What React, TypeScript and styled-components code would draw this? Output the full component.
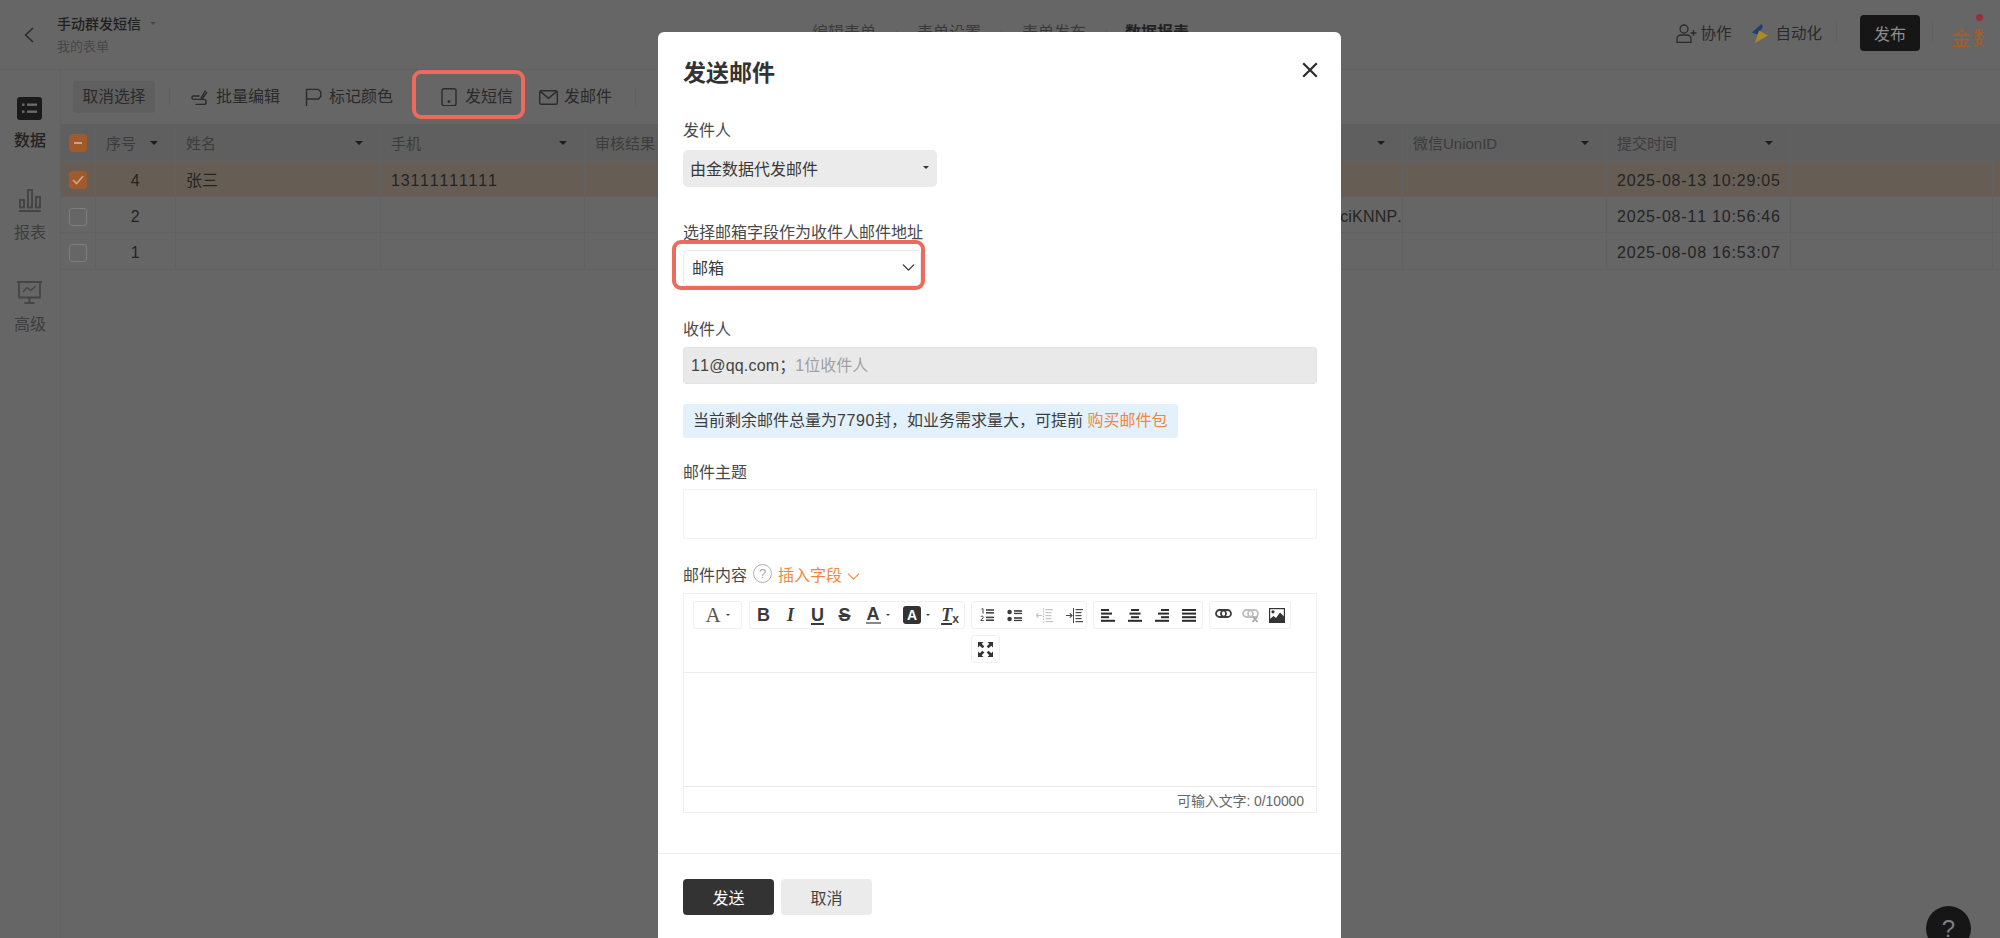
import React from "react";
import styled, { createGlobalStyle } from "styled-components";
import { ChevronDown, ChevronRight } from "lucide-react";

const FONT = `"Liberation Sans", "Noto Sans CJK SC", sans-serif`;
const DIM_LINE = "#616161";

const Global = createGlobalStyle`
  html, body { margin: 0; padding: 0; background: #666; overflow: hidden; }
  body { font-family: ${FONT}; font-kerning: none; }
  * { box-sizing: border-box; }
`;

const Page = styled.div`
  position: relative;
  width: 2000px;
  height: 938px;
  overflow: hidden;
  background: #666;
  color: #222;
`;

/* ---------- top header ---------- */
const Header = styled.header`
  height: 70px;
  display: flex;
  align-items: center;
  border-bottom: 1px solid ${DIM_LINE};
`;
const HeaderLeft = styled.div`
  width: 812px;
  display: flex;
  align-items: center;
  padding-left: 24px;
  gap: 23px;
  color: #2a2a2a;
`;
const TitleBlock = styled.div`
  display: flex;
  flex-direction: column;
  gap: 8px;
`;
const TitleRow = styled.div`
  display: flex;
  align-items: center;
  gap: 9px;
  font-size: 14px;
  line-height: 16px;
  font-weight: 500;
  color: #1f1f1f;
`;
const SubTitle = styled.div`
  font-size: 13px;
  line-height: 14px;
  color: #474747;
`;
const Caret = styled.span<{ $c?: string; $w?: number }>`
  display: inline-block;
  width: 0;
  height: 0;
  flex: none;
  border-left: ${(p) => p.$w ?? 4}px solid transparent;
  border-right: ${(p) => p.$w ?? 4}px solid transparent;
  border-top: ${(p) => p.$w ?? 4}px solid ${(p) => p.$c ?? "#222"};
`;
const Nav = styled.nav`
  display: flex;
  align-items: center;
  gap: 14.5px;
  padding-bottom: 4px;
`;
const NavItem = styled.span<{ $on?: boolean }>`
  font-size: 16px;
  line-height: 16px;
  width: 64px;
  margin-left: ${(p) => (p.$on ? -2 : 0)}px;
  font-weight: ${(p) => (p.$on ? 700 : 400)};
  color: ${(p) => (p.$on ? "#222" : "#3a3a3a")};
`;
const HeaderRight = styled.div`
  margin-left: auto;
  display: flex;
  align-items: center;
  padding-right: 16px;
  height: 100%;
`;
const HeaderAction = styled.div<{ $gap: number; $ml?: number }>`
  display: flex;
  align-items: center;
  gap: ${(p) => p.$gap}px;
  margin-left: ${(p) => p.$ml ?? 0}px;
  font-size: 15.5px;
  line-height: 18px;
  color: #2a2a2a;
  margin-top: -2px;
`;
const VLine = styled.span<{ $ml: number }>`
  width: 1px;
  height: 22px;
  margin-left: ${(p) => p.$ml}px;
  margin-top: -3px;
  background: #606060;
  flex: none;
`;
const Publish = styled.div`
  width: 60px;
  height: 36px;
  margin-left: 23px;
  border-radius: 4px;
  background: #161616;
  color: #8c8c8c;
  font-size: 16px;
  display: flex;
  align-items: center;
  justify-content: center;
  margin-top: -4px;
`;
const Logo = styled.div`
  position: relative;
  margin-left: 18px;
  width: 33px;
  height: 24px;
  display: flex;
  align-items: center;
  color: #a45e2b;
  margin-top: 9px;
`;
const LogoMain = styled.span`
  font-size: 20px;
  line-height: 24px;
`;
const LogoClip = styled.span`
  font-size: 19px;
  line-height: 22px;
  width: 11px;
  margin-left: 2px;
  overflow: hidden;
  white-space: nowrap;
`;
const Dot = styled.span`
  position: absolute;
  right: 1px;
  top: -13px;
  width: 7px;
  height: 7px;
  border-radius: 50%;
  background: #972f3f;
`;

/* ---------- main area ---------- */
const Main = styled.div`
  display: flex;
  height: 868px;
`;
const Side = styled.aside`
  width: 61px;
  flex: none;
  border-right: 1px solid ${DIM_LINE};
  padding-top: 27px;
  display: flex;
  flex-direction: column;
  align-items: center;
  gap: 40px;
`;
const SideItem = styled.div<{ $on?: boolean }>`
  display: flex;
  flex-direction: column;
  align-items: center;
  gap: 13px;
  font-size: 16px;
  line-height: 16px;
  font-weight: ${(p) => (p.$on ? 500 : 400)};
  color: ${(p) => (p.$on ? "#222" : "#3d3d3d")};
`;
const Content = styled.div`
  flex: 1;
  min-width: 0;
`;
const ToolBar = styled.div`
  height: 54px;
  display: flex;
  align-items: center;
  padding-left: 12px;
  font-size: 16px;
  color: #2a2a2a;
`;
const Deselect = styled.div`
  width: 82px;
  height: 32px;
  border-radius: 4px;
  background: #5f5f5f;
  display: flex;
  align-items: center;
  justify-content: center;
  line-height: 32px;
  font-size: 15.75px;
`;
const ToolLine = styled.span<{ $ml: number }>`
  width: 1px;
  height: 18px;
  background: #606060;
  margin-left: ${(p) => p.$ml}px;
`;
const ToolItem = styled.div<{ $ml: number; $gap: number }>`
  position: relative;
  display: flex;
  align-items: center;
  gap: ${(p) => p.$gap}px;
  margin-left: ${(p) => p.$ml}px;
  line-height: 20px;
  white-space: nowrap;
`;
const RedFrame = styled.span`
  position: absolute;
  pointer-events: none;
  border: 4px solid #ee6a5c;
  border-radius: 9px;
`;
const ToolFrame = styled(RedFrame)`
  left: -29px;
  right: -12px;
  top: -17px;
  bottom: -12px;
`;

/* ---------- table ---------- */
const COLS = "35px 80px 205px 204px 205px 407px 206px 204px 184px 202px 1fr";
const TableRow = styled.div<{ $h: number; $head?: boolean; $sel?: boolean }>`
  display: grid;
  grid-template-columns: ${COLS};
  height: ${(p) => p.$h}px;
  background: ${(p) => (p.$head ? "#5f5f5f" : p.$sel ? "#665e55" : "#666")};
  border-bottom: 1px solid ${DIM_LINE};
`;
const Cell = styled.div<{ $center?: boolean; $end?: boolean; $pt?: number }>`
  display: flex;
  align-items: center;
  justify-content: ${(p) => (p.$center ? "center" : p.$end ? "flex-end" : "flex-start")};
  padding: ${(p) => p.$pt ?? 0}px ${(p) => (p.$center || p.$end ? "0" : "10px")} 0;
  border-right: 1px solid ${DIM_LINE};
  font-size: 16px;
  color: #242424;
  letter-spacing: 0.8px;
  overflow: hidden;
  white-space: nowrap;
  &:last-child { border-right: 0; }
`;
const Clipped = styled.span`
  letter-spacing: 0.2px;
  flex: none;
`;
const CnText = styled.span`
  letter-spacing: 0;
`;
const HeadCell = styled.div`
  display: flex;
  align-items: center;
  justify-content: space-between;
  padding: 0 17px 0 10px;
  border-right: 1px solid ${DIM_LINE};
  font-size: 15px;
  color: #3c3c3c;
  overflow: hidden;
  white-space: nowrap;
  &:last-child { border-right: 0; }
`;
const CheckCell = styled.div<{ $pt?: number }>`
  display: flex;
  align-items: center;
  justify-content: center;
  padding-top: ${(p) => p.$pt ?? 0}px;
  border-right: 1px solid ${DIM_LINE};
`;
const Check = styled.span<{ $on?: boolean }>`
  width: 18px;
  height: 18px;
  border-radius: 3px;
  display: flex;
  align-items: center;
  justify-content: center;
  background: ${(p) => (p.$on ? "#a05a2c" : "transparent")};
  border: 1px solid ${(p) => (p.$on ? "#a05a2c" : "#7d7d7d")};
`;
const Minus = styled.span`
  width: 8px;
  height: 2px;
  background: #c8a68e;
`;

/* ---------- help ---------- */
const Help = styled.div`
  position: absolute;
  left: 1926px;
  top: 906px;
  width: 45px;
  height: 45px;
  border-radius: 50%;
  background: #161616;
  color: #7f7f7f;
  font-size: 24px;
  line-height: 45px;
  text-align: center;
`;

/* ---------- modal ---------- */
const Modal = styled.div`
  position: absolute;
  left: 658px;
  top: 32px;
  width: 683px;
  height: 906px;
  background: #fff;
  border-radius: 6px 6px 0 0;
  overflow: hidden;
  color: #333;
`;
const ModalBody = styled.div`
  padding: 25px 24px 0 25px;
`;
const ModalHead = styled.div`
  display: flex;
  align-items: center;
  justify-content: space-between;
  height: 30px;
`;
const ModalTitle = styled.h2`
  margin: 2px 0 0;
  font-size: 23px;
  line-height: 30px;
  font-weight: 700;
  color: #333;
`;
const CloseBox = styled.span`
  margin: -4px -1px 0 0;
`;
const Label = styled.div<{ $mt: number }>`
  margin-top: ${(p) => p.$mt - 1}px;
  margin-bottom: -1px;
  padding-top: 2px;
  font-size: 16px;
  line-height: 22px;
  color: #484848;
  display: flex;
  align-items: center;
`;
const GraySelect = styled.div`
  margin-top: 9px;
  width: 254px;
  height: 37px;
  border-radius: 5px;
  background: #ebebeb;
  display: flex;
  align-items: center;
  justify-content: space-between;
  padding: 0 8px 2px 7px;
  font-size: 16px;
  color: #383838;
`;
const WhiteSelect = styled.div`
  position: relative;
  margin-top: 7px;
  width: 238px;
  height: 36px;
  border-radius: 4px;
  background: #fff;
  border: 1px solid #ececec;
  display: flex;
  align-items: center;
  justify-content: space-between;
  padding: 0 1px 2px 8px;
  font-size: 16px;
  color: #383838;
`;
const SelectFrame = styled(RedFrame)`
  left: -12px;
  right: -5px;
  top: -11px;
  bottom: -5px;
`;
const ReadonlyInput = styled.div`
  margin-top: 7px;
  height: 37px;
  border-radius: 3px;
  background: #e9e9e9;
  border: 1px solid #e4e4e4;
  padding-left: 7px;
  font-size: 16px;
  line-height: 35px;
  color: #444;
`;
const Latin = styled.span`
  letter-spacing: 0.2px;
`;
const Muted = styled.span`
  color: #a0a0a0;
`;
const Notice = styled.div`
  margin-top: 20px;
  width: 495px;
  height: 34px;
  border-radius: 3px;
  background: #e3f1fc;
  padding-left: 10px;
  font-size: 16px;
  line-height: 34px;
  color: #3d3d3d;
  white-space: pre;
`;
const Digits = styled.span`
  letter-spacing: 0.6px;
`;
const Orange = styled.span`
  color: #f2873c;
`;
const Input = styled.div`
  margin-top: 6px;
  height: 50px;
  border: 1px solid #f1f1f1;
  border-radius: 2px;
`;
const QMark = styled.span`
  width: 19px;
  height: 19px;
  margin: -6px 6px 0 6px;
  border-radius: 50%;
  border: 1px solid #b0b0b0;
  color: #a6a6a6;
  font-size: 13px;
  line-height: 17px;
  text-align: center;
`;
const InsertField = styled.span`
  display: flex;
  align-items: center;
  gap: 1px;
  color: #f2873c;
`;
const Editor = styled.div`
  margin-top: 7px;
  border: 1px solid #efefef;
  height: 220px;
  display: flex;
  flex-direction: column;
`;
const EdTools = styled.div`
  height: 79px;
  padding: 7px 25px 0 9px;
  display: flex;
  flex-wrap: wrap;
  align-content: flex-start;
  gap: 6px;
  border-bottom: 1px solid #ebebeb;
`;
const EdGroup = styled.div<{ $ml?: number; $mr?: number }>`
  height: 28px;
  display: flex;
  align-items: stretch;
  border: 1px solid #f0f0f0;
  border-radius: 3px;
  margin-left: ${(p) => p.$ml ?? 0}px;
  margin-right: ${(p) => p.$mr ?? 0}px;
`;
const EdBtn = styled.div<{ $w: number }>`
  width: ${(p) => p.$w}px;
  display: flex;
  align-items: center;
  justify-content: center;
  gap: 5px;
  color: #333;
`;
const EdLetter = styled.span<{ $serif?: boolean; $it?: boolean; $deco?: string; $size?: number; $c?: string }>`
  font-family: ${(p) => (p.$serif ? `"Liberation Serif", serif` : `"Liberation Sans", sans-serif`)};
  font-size: ${(p) => p.$size ?? 18}px;
  font-weight: ${(p) => (p.$serif && !p.$it ? 400 : 700)};
  font-style: ${(p) => (p.$it ? "italic" : "normal")};
  text-decoration: ${(p) => p.$deco ?? "none"};
  text-decoration-thickness: 2px;
  text-underline-offset: 2px;
  line-height: 20px;
  color: ${(p) => p.$c ?? "#3a3a3a"};
`;
const FontColor = styled(EdLetter)`
  display: inline-block;
  border-bottom: 2px solid #888;
  line-height: 15px;
  padding: 0 1px;
`;
const BoxA = styled.span`
  width: 18px;
  height: 18px;
  border-radius: 3px;
  background: #333;
  color: #fff;
  font-family: "Liberation Sans", sans-serif;
  font-size: 14px;
  font-weight: 700;
  line-height: 18px;
  text-align: center;
`;
const ClearFmt = styled.span`
  display: flex;
  align-items: flex-end;
`;
const ClearX = styled.span`
  font-family: "Liberation Sans", sans-serif;
  font-size: 12px;
  font-weight: 700;
  line-height: 11px;
  color: #444;
`;
const EdArea = styled.div`
  height: 114px;
  border-bottom: 1px solid #ebebeb;
`;
const EdFoot = styled.div`
  flex: 1;
  display: flex;
  align-items: center;
  justify-content: flex-end;
  padding-right: 12px;
  font-size: 14px;
  letter-spacing: -0.1px;
  color: #666;
`;
const ModalFoot = styled.div`
  margin-top: 40px;
  border-top: 1px solid #efefef;
  padding: 25px 25px 0;
  display: flex;
  gap: 7px;
`;
const Btn = styled.div<{ $primary?: boolean }>`
  width: 91px;
  height: 36px;
  border-radius: 4px;
  background: ${(p) => (p.$primary ? "#333" : "#ebebeb")};
  color: ${(p) => (p.$primary ? "#fff" : "#444")};
  font-size: 16px;
  display: flex;
  align-items: center;
  justify-content: center;
`;

/* ---------- icons ---------- */
const S = ({ w, h, children, vb }: { w: number; h: number; vb?: string; children: React.ReactNode }) => (
  <svg width={w} height={h} viewBox={vb ?? `0 0 ${w} ${h}`} fill="none" style={{ flex: "none", display: "block" }}>
    {children}
  </svg>
);

const BarsIcon = ({ rows }: { rows: [number, number, number][] }) => (
  <S w={14} h={13}>
    {rows.map(([x, y, w], i) => (
      <rect key={i} x={x} y={y} width={w} height={2} fill="#2b2b2b" />
    ))}
  </S>
);
const alignRows = {
  left: [[0, 0, 8], [0, 3.6, 11], [0, 7.2, 8], [0, 10.8, 14]],
  center: [[3, 0, 8], [1.5, 3.6, 11], [3, 7.2, 8], [0, 10.8, 14]],
  right: [[6, 0, 8], [3, 3.6, 11], [6, 7.2, 8], [0, 10.8, 14]],
  full: [[0, 0, 14], [0, 3.6, 14], [0, 7.2, 14], [0, 10.8, 14]],
} as Record<string, [number, number, number][]>;

const BackIcon = () => (
  <S w={10} h={16}>
    <path d="M9 1 L1.6 8 L9 15" stroke="#2a2a2a" strokeWidth="1.5" />
  </S>
);
const OlIcon = () => (
  <S w={14} h={14}>
    <path d="M1.5 1.2 L3 .6 V5.6" stroke="#444" strokeWidth="1" />
    <path d="M.8 9 C1.5 7.6 3.6 8 3.2 9.6 L.8 12.6 H3.8" stroke="#444" strokeWidth="1" />
    <rect x="6" y="1.2" width="8" height="1.6" fill="#444" />
    <rect x="6" y="4" width="8" height="1.6" fill="#444" />
    <rect x="6" y="8.6" width="8" height="1.6" fill="#444" />
    <rect x="6" y="11.4" width="8" height="1.6" fill="#444" />
  </S>
);
const UlIcon = () => (
  <S w={15} h={13}>
    <circle cx="2.6" cy="3" r="2.3" fill="#3a3a3a" />
    <circle cx="2.6" cy="10" r="2.3" fill="#3a3a3a" />
    <rect x="7" y="1.2" width="8" height="1.6" fill="#3a3a3a" />
    <rect x="7" y="3.8" width="8" height="1.3" fill="#3a3a3a" />
    <rect x="7" y="8.2" width="8" height="1.6" fill="#3a3a3a" />
    <rect x="7" y="10.8" width="8" height="1.3" fill="#3a3a3a" />
  </S>
);
const IndentIcon = ({ out }: { out?: boolean }) => {
  const c = out ? "#c4c4c4" : "#4a4a4a";
  return (
    <S w={17} h={15}>
      <path d="M7.5 0 V15" stroke={c} strokeWidth="1" strokeDasharray={out ? "1.6 1" : "none"} />
      <path d={out ? "M0 7.5 H6 M2.4 5.4 L.4 7.5 L2.4 9.6" : "M0 7.5 H6 M3.8 5.4 L6 7.5 L3.8 9.6"} stroke={c} strokeWidth="1.2" />
      {[1, 4, 7, 10, 13].map((y) => (
        <rect key={y} x={9.5} y={y} width={y === 1 || y === 13 ? 7.5 : 6} height={1.2} fill={c} />
      ))}
    </S>
  );
};
const LinkIcon = ({ off }: { off?: boolean }) => {
  const c = off ? "#c0c0c0" : "#3c3c3c";
  return (
    <S w={17} h={16}>
      <rect x="1" y="3" width="10" height="7" rx="3.5" stroke={c} strokeWidth="1.8" />
      <rect x="6" y="3" width="10" height="7" rx="3.5" stroke={c} strokeWidth="1.8" />
      {off ? <path d="M10.5 9.5 L15.5 15 M15.5 9.5 L10.5 15" stroke="#a8a8a8" strokeWidth="1.8" /> : null}
    </S>
  );
};
const ImageIcon = () => (
  <S w={16} h={15}>
    <rect x=".6" y=".6" width="14.8" height="13.8" stroke="#333" strokeWidth="1.2" />
    <circle cx="4" cy="3.8" r="1.6" fill="#333" />
    <path d="M1 14 V11 L4.5 8 L7 10 L11 4.5 L15 8.5 V14 Z" fill="#333" />
  </S>
);
const FullIcon = () => (
  <S w={17} h={17}>
    <path d="M1 1 H6.5 L4.7 2.8 L7.3 5.4 L5.4 7.3 L2.8 4.7 L1 6.5 Z" fill="#333" />
    <path d="M16 1 H10.5 L12.3 2.8 L9.7 5.4 L11.6 7.3 L14.2 4.7 L16 6.5 Z" fill="#333" />
    <path d="M1 16 H6.5 L4.7 14.2 L7.3 11.6 L5.4 9.7 L2.8 12.3 L1 10.5 Z" fill="#333" />
    <path d="M16 16 H10.5 L12.3 14.2 L9.7 11.6 L11.6 9.7 L14.2 12.3 L16 10.5 Z" fill="#333" />
  </S>
);
const CloseIcon = () => (
  <S w={16} h={16}>
    <path d="M1.2 1.2 L14.8 14.8 M14.8 1.2 L1.2 14.8" stroke="#2f2f2f" strokeWidth="2.3" />
  </S>
);
const DataIcon = () => (
  <S w={25} h={23}>
    <rect width="25" height="23" rx="3" fill="#1a1a1a" />
    <rect x="5" y="6.5" width="2.5" height="2.4" fill="#6a6a6a" />
    <rect x="5" y="13.5" width="2.5" height="2.4" fill="#6a6a6a" />
    <rect x="10" y="6.5" width="10" height="2.4" fill="#6a6a6a" />
    <rect x="10" y="13.5" width="10" height="2.4" fill="#6a6a6a" />
  </S>
);
const ChartIcon = () => (
  <S w={22} h={23}>
    <rect x="1" y="11" width="4" height="7.4" stroke="#454545" strokeWidth="2" />
    <rect x="9" y="1" width="4" height="17.4" stroke="#454545" strokeWidth="2" />
    <rect x="17" y="8" width="4" height="10.4" stroke="#454545" strokeWidth="2" />
    <rect x="0" y="21" width="22" height="2" fill="#454545" />
  </S>
);
const BoardIcon = () => (
  <S w={25} h={23}>
    <path d="M0 1 H25 M2 1 V16.5 H23 V1" stroke="#454545" strokeWidth="1.8" />
    <path d="M6 11 L10 6.5 L13.5 9.5 L19 5" stroke="#454545" strokeWidth="1.4" />
    <path d="M12.5 17 V21 M7.5 22 H17.5" stroke="#454545" strokeWidth="2" />
  </S>
);
const EditIcon = () => (
  <S w={17} h={17}>
    <path d="M10 9 L14.5 1.5 M16 3 L11.5 9.5 L9.5 10" stroke="#2b2b2b" strokeWidth="1.4" />
    <path d="M8 7 H2.6 C.4 7 .4 10.4 2.6 10.4 H13 C15.8 10.4 15.8 15.4 13 15.4 H5" stroke="#2b2b2b" strokeWidth="1.4" strokeLinecap="round" />
  </S>
);
const FlagIcon = () => (
  <S w={17} h={18}>
    <path d="M1.5 18 V1.4 H13.5 L15.8 4 V8.5 L13.5 11 H1.5" stroke="#2b2b2b" strokeWidth="1.4" strokeLinejoin="round" />
  </S>
);
const PhoneIcon = () => (
  <S w={16} h={18}>
    <rect x="1" y=".7" width="14" height="17" rx="2" stroke="#2b2b2b" strokeWidth="1.4" />
    <circle cx="8" cy="13.6" r="1.4" fill="#2b2b2b" />
  </S>
);
const MailIcon = () => (
  <S w={19} h={15}>
    <rect x=".7" y=".7" width="17.6" height="13.6" rx="1.6" stroke="#2b2b2b" strokeWidth="1.4" />
    <path d="M1.2 1.4 L9.5 8.4 L17.8 1.4" stroke="#2b2b2b" strokeWidth="1.4" />
  </S>
);
const UserPlusIcon = () => (
  <S w={21} h={19}>
    <circle cx="8" cy="5" r="4" stroke="#2b2b2b" strokeWidth="1.3" />
    <path d="M1 18.3 V15 C1 12.5 3 11 5 11 H11 C13 11 15 12.5 15 15 V18.3 Z" stroke="#2b2b2b" strokeWidth="1.3" />
    <path d="M17.5 6 V12 M14.5 9 H20.5" stroke="#2b2b2b" strokeWidth="1.3" />
  </S>
);
const BoltIcon = () => (
  <S w={16} h={19}>
    <path d="M0 8.5 L9.5 0 L11 3 L5.5 10.5 Z" fill="#1d3f78" />
    <path d="M7 6.5 L16 11.5 L3 19 Z" fill="#a98a26" />
  </S>
);

const heads = ["序号", "姓名", "手机", "审核结果", "", "", "微信UnionID", "提交时间", ""];

const rows = [
  { sel: true, no: "4", name: "张三", phone: "13111111111", openid: "", time: "2025-08-13 10:29:05", h: 35, pt: 1, dpt: 3 },
  { sel: false, no: "2", name: "", phone: "", openid: "oY1fciKNNP.", time: "2025-08-11 10:56:46", h: 36, pt: 4, dpt: 4 },
  { sel: false, no: "1", name: "", phone: "", openid: "", time: "2025-08-08 16:53:07", h: 37, pt: 4, dpt: 4 },
];

export default function App() {
  return (
    <Page>
      <Global />
      <Header>
        <HeaderLeft>
          <BackIcon />
          <TitleBlock>
            <TitleRow>
              手动群发短信
              <Caret $c="#4a4a4a" $w={3} />
            </TitleRow>
            <SubTitle>我的表单</SubTitle>
          </TitleBlock>
        </HeaderLeft>
        <Nav>
          <NavItem>编辑表单</NavItem>
          <ChevronRight size={12} color="#5a5a5a" />
          <NavItem>表单设置</NavItem>
          <ChevronRight size={12} color="#5a5a5a" />
          <NavItem>表单发布</NavItem>
          <ChevronRight size={12} color="#5a5a5a" />
          <NavItem $on>数据报表</NavItem>
        </Nav>
        <HeaderRight>
          <HeaderAction $gap={3}>
            <UserPlusIcon />
            协作
          </HeaderAction>
          <HeaderAction $gap={7} $ml={21}>
            <BoltIcon />
            自动化
          </HeaderAction>
          <VLine $ml={14} />
          <Publish>发布</Publish>
          <VLine $ml={12} />
          <Logo>
            <LogoMain>金</LogoMain>
            <LogoClip>数</LogoClip>
            <Dot />
          </Logo>
        </HeaderRight>
      </Header>
      <Main>
        <Side>
          <SideItem $on>
            <DataIcon />
            数据
          </SideItem>
          <SideItem>
            <ChartIcon />
            报表
          </SideItem>
          <SideItem>
            <BoardIcon />
            高级
          </SideItem>
        </Side>
        <Content>
          <ToolBar>
            <Deselect>取消选择</Deselect>
            <ToolLine $ml={14} />
            <ToolItem $ml={21} $gap={8}>
              <EditIcon />
              批量编辑
            </ToolItem>
            <ToolItem $ml={25} $gap={7}>
              <FlagIcon />
              标记颜色
            </ToolItem>
            <ToolItem $ml={48} $gap={8}>
              <PhoneIcon />
              发短信
              <ToolFrame />
            </ToolItem>
            <ToolItem $ml={26} $gap={6}>
              <MailIcon />
              发邮件
            </ToolItem>
            <ToolLine $ml={23} />
          </ToolBar>
          <TableRow $h={38} $head>
            <CheckCell>
              <Check $on>
                <Minus />
              </Check>
            </CheckCell>
            {heads.map((h, i) => (
              <HeadCell key={i}>
                <span>{h}</span>
                {i < 8 && i !== 4 ? <Caret $c="#1c1c1c" /> : null}
              </HeadCell>
            ))}
          </TableRow>
          {rows.map((r) => (
            <TableRow key={r.no} $h={r.h} $sel={r.sel}>
              <CheckCell $pt={r.pt}>
                <Check $on={r.sel}>
                  {r.sel ? (
                    <S w={12} h={10}>
                      <path d="M1 5 L4.5 8.5 L11 1.2" stroke="#cda98f" strokeWidth="1.6" />
                    </S>
                  ) : null}
                </Check>
              </CheckCell>
              <Cell $center $pt={r.dpt}>{r.no}</Cell>
              <Cell>
                <CnText>{r.name}</CnText>
              </Cell>
              <Cell $pt={r.dpt}>{r.phone}</Cell>
              <Cell />
              <Cell />
              <Cell $end $pt={r.dpt}>
                <Clipped>{r.openid}</Clipped>
              </Cell>
              <Cell />
              <Cell $pt={r.dpt}>{r.time}</Cell>
              <Cell />
              <Cell />
            </TableRow>
          ))}
        </Content>
      </Main>
      <Help>?</Help>

      <Modal>
        <ModalBody>
          <ModalHead>
            <ModalTitle>发送邮件</ModalTitle>
            <CloseBox>
              <CloseIcon />
            </CloseBox>
          </ModalHead>

          <Label $mt={32}>发件人</Label>
          <GraySelect>
            由金数据代发邮件
            <Caret $c="#333" $w={3.5} />
          </GraySelect>

          <Label $mt={34}>选择邮箱字段作为收件人邮件地址</Label>
          <WhiteSelect>
            邮箱
            <ChevronDown size={21} strokeWidth={1.5} color="#333" />
            <SelectFrame />
          </WhiteSelect>

          <Label $mt={32}>收件人</Label>
          <ReadonlyInput>
            <Latin>11@qq.com</Latin>；<Muted>1位收件人</Muted>
          </ReadonlyInput>

          <Notice>
            当前剩余邮件总量为<Digits>7790</Digits>封，如业务需求量大，可提前 <Orange>购买邮件包</Orange>
          </Notice>

          <Label $mt={23}>邮件主题</Label>
          <Input />

          <Label $mt={25}>
            邮件内容
            <QMark>?</QMark>
            <InsertField>
              插入字段
              <ChevronDown size={21} strokeWidth={1.2} />
            </InsertField>
          </Label>
          <Editor>
            <EdTools>
              <EdGroup $mr={1}>
                <EdBtn $w={47}>
                  <EdLetter $serif $size={21} $c="#555">A</EdLetter>
                  <Caret $c="#444" $w={2.5} />
                </EdBtn>
              </EdGroup>
              <EdGroup>
                <EdBtn $w={27}><EdLetter>B</EdLetter></EdBtn>
                <EdBtn $w={27}><EdLetter $serif $it>I</EdLetter></EdBtn>
                <EdBtn $w={27}><EdLetter $deco="underline">U</EdLetter></EdBtn>
                <EdBtn $w={27}><EdLetter $deco="line-through">S</EdLetter></EdBtn>
                <EdBtn $w={39}>
                  <FontColor>A</FontColor>
                  <Caret $c="#444" $w={2.5} />
                </EdBtn>
                <EdBtn $w={39}>
                  <BoxA>A</BoxA>
                  <Caret $c="#444" $w={2.5} />
                </EdBtn>
                <EdBtn $w={28}>
                  <ClearFmt>
                    <EdLetter $serif $it $deco="underline">T</EdLetter>
                    <ClearX>x</ClearX>
                  </ClearFmt>
                </EdBtn>
              </EdGroup>
              <EdGroup>
                <EdBtn $w={29}><OlIcon /></EdBtn>
                <EdBtn $w={26}><UlIcon /></EdBtn>
                <EdBtn $w={35}><IndentIcon out /></EdBtn>
                <EdBtn $w={24}><IndentIcon /></EdBtn>
              </EdGroup>
              <EdGroup>
                <EdBtn $w={27}><BarsIcon rows={alignRows.left} /></EdBtn>
                <EdBtn $w={27}><BarsIcon rows={alignRows.center} /></EdBtn>
                <EdBtn $w={27}><BarsIcon rows={alignRows.right} /></EdBtn>
                <EdBtn $w={27}><BarsIcon rows={alignRows.full} /></EdBtn>
              </EdGroup>
              <EdGroup>
                <EdBtn $w={27}><LinkIcon /></EdBtn>
                <EdBtn $w={27}><LinkIcon off /></EdBtn>
                <EdBtn $w={26}><ImageIcon /></EdBtn>
              </EdGroup>
              <EdGroup $ml={278}>
                <EdBtn $w={27}><FullIcon /></EdBtn>
              </EdGroup>
            </EdTools>
            <EdArea />
            <EdFoot>可输入文字: 0/10000</EdFoot>
          </Editor>
        </ModalBody>
        <ModalFoot>
          <Btn $primary>发送</Btn>
          <Btn>取消</Btn>
        </ModalFoot>
      </Modal>
    </Page>
  );
}
